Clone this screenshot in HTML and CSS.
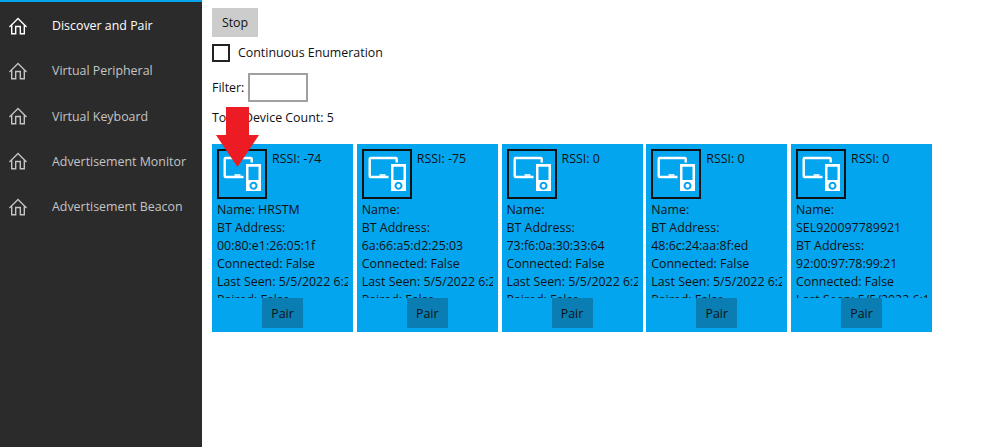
FILE: index.html
```html
<!DOCTYPE html>
<html lang="en">
<head>
<meta charset="utf-8">
<title>Discover and Pair</title>
<link rel="stylesheet" href="styles.css">
</head>
<body>
<svg class="defs" width="0" height="0" aria-hidden="true">
  <symbol id="home" viewBox="0 0 18 18">
    <path d="M.4 10 9 1.400 17.600 10M2.700 7.700V16.700H6.700V9.500H11.300V16.700H15.300V7.700" fill="none" stroke="currentColor" stroke-width="1.400"/>
  </symbol>
  <symbol id="devices" viewBox="0 0 46 46">
    <path d="M24.500 26H6.700a1 1 0 0 1-1-1V8a1 1 0 0 1 1-1H31.700a1 1 0 0 1 1 1V11.500" fill="none" stroke="#fff" stroke-width="2.400"/>
    <rect x="15.500" y="23.200" width="6" height="1.600" fill="#fff"/>
    <path fill="#fff" fill-rule="evenodd" d="M27 13H42V40H27ZM29.500 15.800V29H39.500V15.800ZM34.500 30.800a4 4 0 1 0 .01 0ZM34.500 32.800a2 2 0 1 1-.01 0Z"/>
  </symbol>
</svg>
<div class="app">
  <nav class="sidebar">
    <a class="nav-item active"><svg class="nav-icon"><use href="#home"/></svg><span>Discover and Pair</span></a>
    <a class="nav-item"><svg class="nav-icon"><use href="#home"/></svg><span>Virtual Peripheral</span></a>
    <a class="nav-item"><svg class="nav-icon"><use href="#home"/></svg><span>Virtual Keyboard</span></a>
    <a class="nav-item"><svg class="nav-icon"><use href="#home"/></svg><span>Advertisement Monitor</span></a>
    <a class="nav-item"><svg class="nav-icon"><use href="#home"/></svg><span>Advertisement Beacon</span></a>
  </nav>
  <main class="content">
    <button class="stop">Stop</button>
    <label class="check"><span class="box"></span><span class="check-text">Continuous Enumeration</span></label>
    <div class="filter"><span>Filter:</span><span class="input"></span></div>
    <div class="count">Total Device Count: 5</div>
    <div class="cards">
      <article class="card">
        <div class="head"><div class="icon"><svg class="device"><use href="#devices"/></svg></div><div class="rssi">RSSI: -74</div></div>
        <div class="info"><div>Name: HRSTM</div><div>BT Address:<br>00:80:e1:26:05:1f</div><div>Connected: False</div><div class="nowrap">Last Seen: 5/5/2022 6:2</div><div>Paired: False</div></div>
        <button class="pair">Pair</button>
      </article>
      <article class="card">
        <div class="head"><div class="icon"><svg class="device"><use href="#devices"/></svg></div><div class="rssi">RSSI: -75</div></div>
        <div class="info"><div>Name:</div><div>BT Address:<br>6a:66:a5:d2:25:03</div><div>Connected: False</div><div class="nowrap">Last Seen: 5/5/2022 6:2</div><div>Paired: False</div></div>
        <button class="pair">Pair</button>
      </article>
      <article class="card">
        <div class="head"><div class="icon"><svg class="device"><use href="#devices"/></svg></div><div class="rssi">RSSI: 0</div></div>
        <div class="info"><div>Name:</div><div>BT Address:<br>73:f6:0a:30:33:64</div><div>Connected: False</div><div class="nowrap">Last Seen: 5/5/2022 6:2</div><div>Paired: False</div></div>
        <button class="pair">Pair</button>
      </article>
      <article class="card">
        <div class="head"><div class="icon"><svg class="device"><use href="#devices"/></svg></div><div class="rssi">RSSI: 0</div></div>
        <div class="info"><div>Name:</div><div>BT Address:<br>48:6c:24:aa:8f:ed</div><div>Connected: False</div><div class="nowrap">Last Seen: 5/5/2022 6:2</div><div>Paired: False</div></div>
        <button class="pair">Pair</button>
      </article>
      <article class="card">
        <div class="head"><div class="icon"><svg class="device"><use href="#devices"/></svg></div><div class="rssi">RSSI: 0</div></div>
        <div class="info"><div>Name:<br>SEL920097789921</div><div>BT Address:<br>92:00:97:78:99:21</div><div>Connected: False</div><div class="nowrap">Last Seen: 5/5/2022 6:1</div></div>
        <button class="pair">Pair</button>
      </article>
    </div>
    <svg class="arrow" viewBox="0 0 43 60" aria-hidden="true"><path d="M10 0H33V28H43L21.500 60 0 28H10Z" fill="#ed1c24"/></svg>
  </main>
</div>
</body>
</html>
```
FILE: styles.css
```css
html, body { margin: 0; height: 100%; background: #fff; }
body { font-family: "Open Sans", "Noto Sans", sans-serif; font-size: 12.4px; color: #111; overflow: hidden; }
.defs { position: absolute; }
.app { display: flex; height: 447px; }
.sidebar { width: 202px; flex: none; box-sizing: border-box; background: #2b2b2b; border-top: 2px solid #03a5ef; padding-top: 1px; }
.nav-item { display: flex; align-items: center; height: 45.25px; padding-left: 9px; gap: 25px; color: #c4c4c4; }
.nav-item.active { color: #fff; }
.nav-icon { width: 18px; height: 18px; flex: none; }
.content { position: relative; flex: 1; padding: 8px 0 0 10px; }
.stop { display: block; width: 46px; height: 29px; border: 0; padding: 0; background: #cccccc; font: inherit; color: #111; }
.check { display: flex; align-items: center; gap: 8px; margin-top: 7px; height: 18px; }
.check-text { padding-bottom: 2px; }
.box { width: 18px; height: 18px; box-sizing: border-box; border: 2px solid #222; flex: none; }
.filter { display: flex; align-items: center; gap: 4px; margin-top: 11px; height: 29px; }
.input { width: 60px; height: 29px; box-sizing: border-box; border: 2px solid #a0a0a0; }
.count { margin-top: 7px; height: 17px; line-height: 17px; }
.cards { display: flex; gap: 3.750px; margin-top: 18px; }
.card { width: 141px; height: 188px; box-sizing: border-box; background: #03a5ef; padding: 5px; display: flex; flex-direction: column; flex: none; }
.head { display: flex; gap: 5px; height: 50px; flex: none; }
.icon { width: 50px; height: 50px; box-sizing: border-box; border: 2px solid #111; flex: none; }
.device { display: block; width: 46px; height: 46px; }
.rssi { line-height: 18px; padding-top: 1px; }
.info { height: 97px; margin-top: 2px; overflow: hidden; line-height: 18px; flex: none; width: 131px; }
.nowrap { white-space: nowrap; }
.pair { align-self: center; width: 41px; height: 30px; flex: none; border: 0; padding: 0; background: #0a7db3; font: inherit; color: #111; }
.arrow { position: absolute; left: 14px; top: 107px; width: 43px; height: 60px; }
```
